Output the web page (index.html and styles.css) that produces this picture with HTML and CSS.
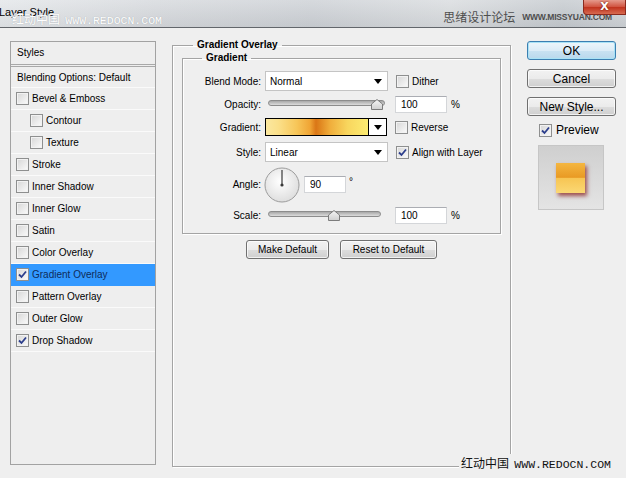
FILE: index.html
```html
<!doctype html>
<html>
<head>
<meta charset="utf-8">
<title>Layer Style</title>
<link rel="stylesheet" href="styles.css">
</head>
<body>

<div class="titlebar">
	<span class="title">Layer Style</span>
	<span class="wm-top"><span class="cjk">红动中国</span> <span class="mono">WWW.REDOCN.COM</span></span>
	<span class="wm-right"><span class="cjk">思绪设计论坛</span><small>WWW.MISSYUAN.COM</small></span>
	<span class="close">X</span>
</div>

<div class="main">
	<div class="styles-list">
		<div class="list-head">Styles</div>
		<div class="row-item plain">Blending Options: Default</div>
		<div class="row-item"><i class="cb"></i>Bevel &amp; Emboss</div>
		<div class="row-item sub"><i class="cb"></i>Contour</div>
		<div class="row-item sub"><i class="cb"></i>Texture</div>
		<div class="row-item"><i class="cb"></i>Stroke</div>
		<div class="row-item"><i class="cb"></i>Inner Shadow</div>
		<div class="row-item"><i class="cb"></i>Inner Glow</div>
		<div class="row-item"><i class="cb"></i>Satin</div>
		<div class="row-item"><i class="cb"></i>Color Overlay</div>
		<div class="row-item active"><i class="cb"><svg width="11" height="11"><path d="M2 5.5 L4.5 8 L9 2.5" fill="none" stroke="#2c3e8c" stroke-width="1.8"/></svg></i>Gradient Overlay</div>
		<div class="row-item"><i class="cb"></i>Pattern Overlay</div>
		<div class="row-item"><i class="cb"></i>Outer Glow</div>
		<div class="row-item"><i class="cb"><svg width="11" height="11"><path d="M2 5.5 L4.5 8 L9 2.5" fill="none" stroke="#2c3e8c" stroke-width="1.8"/></svg></i>Drop Shadow</div>
	</div>

	<fieldset class="group outer">
		<legend>Gradient Overlay</legend>
		<fieldset class="group inner">
			<legend>Gradient</legend>

			<div class="frow r1">
				<label>Blend Mode:</label>
				<div class="select">Normal<i class="arrow"></i></div>
				<i class="cb after"></i><span class="opt">Dither</span>
			</div>

			<div class="frow r2">
				<label>Opacity:</label>
				<div class="slider">
					<div class="track"></div>
					<svg class="thumb" style="left:106px" width="12" height="11"><defs><linearGradient id="tg" x1="0" y1="0" x2="0" y2="1"><stop offset="0" stop-color="#f6f6f6"/><stop offset="1" stop-color="#cfcfcf"/></linearGradient></defs><polygon points="0.5,5 6,0.5 11.5,5 11.5,10.5 0.5,10.5" fill="url(#tg)" stroke="#7c7c7c"/></svg>
				</div>
				<div class="num wide">100</div><span class="unit">%</span>
			</div>

			<div class="frow r3">
				<label>Gradient:</label>
				<div class="grad"><div class="grad-fill"></div><div class="grad-drop"><i class="arrow"></i></div></div>
				<i class="cb after"></i><span class="opt">Reverse</span>
			</div>

			<div class="frow r4">
				<label>Style:</label>
				<div class="select">Linear<i class="arrow"></i></div>
				<i class="cb after"><svg width="11" height="11"><path d="M2 5.5 L4.5 8 L9 2.5" fill="none" stroke="#2c3e8c" stroke-width="1.8"/></svg></i><span class="opt">Align with Layer</span>
			</div>

			<div class="frow r5">
				<label>Angle:</label>
				<svg class="dial" width="36" height="36"><defs><radialGradient id="dg" cx="0.45" cy="0.4" r="0.6"><stop offset="0" stop-color="#ffffff"/><stop offset="1" stop-color="#dedede"/></radialGradient></defs><circle cx="18" cy="18" r="17" fill="url(#dg)" stroke="#9c9c9c"/><line x1="18" y1="18" x2="18" y2="3" stroke="#3a3a3a" stroke-width="1.2"/><circle cx="18" cy="18" r="1.6" fill="#3a3a3a"/></svg>
				<div class="num angle">90</div><span class="deg">°</span>
			</div>

			<div class="frow r6">
				<label>Scale:</label>
				<div class="slider short">
					<div class="track"></div>
					<svg class="thumb" style="left:63px" width="12" height="11"><polygon points="0.5,5 6,0.5 11.5,5 11.5,10.5 0.5,10.5" fill="url(#tg)" stroke="#7c7c7c"/></svg>
				</div>
				<div class="num wide">100</div><span class="unit">%</span>
			</div>
		</fieldset>

		<div class="defaults">
			<button class="btn make">Make Default</button>
			<button class="btn reset">Reset to Default</button>
		</div>
	</fieldset>

	<div class="side">
		<button class="btn big ok">OK</button>
		<button class="btn big">Cancel</button>
		<button class="btn big">New Style...</button>
		<div class="preview-row"><i class="cb"><svg width="11" height="11"><path d="M2 5.5 L4.5 8 L9 2.5" fill="none" stroke="#2c3e8c" stroke-width="1.8"/></svg></i>Preview</div>
		<div class="preview"><div class="swatch"></div></div>
	</div>
</div>

<div class="wm-bottom"><span class="cjk">红动中国</span> <span class="mono">WWW.REDOCN.COM</span></div>

</body>
</html>
```

FILE: styles.css
```css
body{ margin:0; width:626px; height:478px; overflow:hidden; position:relative; background:#efefef; color:#000; font:10px "Liberation Sans", Arial, sans-serif; }
i{ font-style:normal; }

/* title bar */
.titlebar{ height:27px; border-bottom:1px solid #62666b; display:flex; align-items:flex-start; position:relative;
	background:linear-gradient(rgba(255,255,255,.2), rgba(0,0,0,.04)), linear-gradient(90deg, #e3e6e9 0%, #d5d8dc 25%, #ccd0d5 50%, #d8dbde 72%, #c4c9ce 90%, #ced2d6 100%); }
.title{ font-size:11px; margin:6px 0 0 -1px; }
.cjk{ font-family:"Noto Sans CJK SC", sans-serif; }
.mono{ font-family:"Liberation Mono", monospace; }
.wm-top{ position:absolute; left:12px; top:10px; color:#fff; font-size:12px; text-shadow:0 0 1px #9aa0a6; }
.wm-top .mono{ font-size:11.5px; margin-left:2px; }
.wm-right{ margin:8px 14px 0 auto; display:flex; align-items:center; color:#4e4e4e; }
.wm-right .cjk{ font-size:12px; }
.wm-right small{ font:bold 8.5px "Liberation Sans", Arial, sans-serif; margin-left:7px; letter-spacing:-0.2px; }
.close{ position:absolute; right:0; top:0; width:43px; height:15px; box-sizing:border-box; border:1px solid #8a2a1e; border-top:none; border-radius:0 0 0 4px;
	background:linear-gradient(#e59a8c, #d0523e 50%, #c0321d 51%, #d76a50); color:#fff; font:bold 11px "DejaVu Sans", sans-serif; line-height:13px; text-align:center; text-shadow:0 0 2px #5a0c00; }

.main{ display:flex; align-items:flex-start; }

/* styles list */
.styles-list{ width:146px; height:424px; box-sizing:border-box; margin:13px 0 0 10px; border:1px solid #a2a2a2; background:#eeeeee; }
.list-head{ height:22px; line-height:22px; padding-left:6px; border-bottom:3px double #a8a8a8; }
.row-item{ height:21px; border-bottom:1px solid #fafafa; display:flex; align-items:center; padding-left:5px; }
.row-item.plain{ height:20px; padding-left:6px; }
.row-item.sub{ padding-left:19px; }
.row-item .cb{ margin-right:3px; }
.row-item.active{ background:#3399ff; color:#0e2c5a; border-bottom-color:#3399ff; }

.cb{ width:13px; height:13px; box-sizing:border-box; flex:none; display:inline-flex; align-items:center; justify-content:center; border:1px solid #8e8f8f; background:linear-gradient(135deg, #d6d6d6, #fbfbfb); box-shadow:inset 0 0 0 1px #f2f2f2; }

/* group boxes */
.group{ margin:0; padding:0; min-width:0; border:1px solid #a4a4a4; box-shadow:1px 1px 0 #fff, inset 1px 1px 0 #fff; }
.group legend{ padding:0 4px; font-weight:bold; line-height:12px; }
.outer{ width:339px; height:428px; box-sizing:border-box; margin:11px 0 0 16px; }
.outer > legend{ margin-left:20px; }
.inner{ width:319px; height:182px; box-sizing:border-box; margin:1px 0 0 9px; padding-top:6px; }
.inner > legend{ margin-left:19px; }

.frow{ display:flex; align-items:center; height:22px; }
.frow label{ width:78px; text-align:right; margin-right:4px; flex:none; }
.r2, .r3{ margin-top:1px; }
.r4{ margin-top:3px; }
.r5{ height:35px; margin-top:4px; }
.r6{ margin-top:2px; }

.select{ width:123px; height:20px; box-sizing:border-box; border:1px solid #c4c4c4; background:#fff; display:flex; align-items:center; padding-left:4px; position:relative; }
.arrow{ width:0; height:0; border-left:4px solid transparent; border-right:4px solid transparent; border-top:5px solid #000; }
.select .arrow{ margin-left:auto; margin-right:5px; }
.cb.after{ margin-left:8px; flex:none; }
.opt{ margin-left:3px; }

.slider{ width:123px; height:12px; position:relative; }
.track{ height:4px; margin:2px 3px 0 3px; border:1px solid #8c8c8c; border-radius:3px; background:linear-gradient(#a8a8a8, #dcdcdc); }
.slider.short .track{ margin-right:7px; }
.thumb{ position:absolute; top:1px; }

.num{ height:17px; box-sizing:border-box; border:1px solid #d4d6d9; border-top-color:#abadb3; background:#fff; padding-left:5px; line-height:15px; }
.num.wide{ width:52px; margin-left:7px; }
.unit{ margin-left:4px; }
.dial{ flex:none; margin-left:-1px; }
.num.angle{ width:42px; margin-left:4px; }
.deg{ margin-left:3px; align-self:flex-start; margin-top:9px; }

.grad{ width:122px; height:18px; box-sizing:border-box; border:1px solid #000; display:flex; }
.grad-fill{ flex:1; background:linear-gradient(90deg, #fbe8a0 0%, #fbe08a 12%, #f7c659 30%, #f0a535 43%, #da7616 49%, #e08620 53%, #f0ae3c 63%, #f8d65e 80%, #fcec72 100%); }
.grad-drop{ width:17px; border-left:1px solid #000; background:#fff; display:flex; align-items:center; justify-content:center; }

.defaults{ display:flex; justify-content:center; gap:11px; margin-top:6px; }

/* buttons */
.btn{ height:19px; box-sizing:border-box; padding:0; border:1px solid #707070; border-radius:3px; color:#000; font:10px "Liberation Sans", Arial, sans-serif;
	background:linear-gradient(#f2f2f2 0%, #ebebeb 50%, #dddddd 51%, #cfcfcf 100%); box-shadow:inset 0 0 0 1px rgba(255,255,255,.7); }
.btn.make{ width:83px; }
.btn.reset{ width:97px; }

.side{ width:89px; margin:13px 0 0 16px; display:flex; flex-direction:column; gap:9px; }
.btn.big{ width:89px; font-size:12px; line-height:16px; }
.btn.ok{ border-color:#3c7fb1; background:linear-gradient(#eef6fb 0%, #dcecf7 50%, #c9e2f2 51%, #b9d8ec 100%); box-shadow:inset 0 0 0 1px #a9e2f6; }
.preview-row{ display:flex; align-items:center; height:16px; margin:-3px 0 0 12px; font-size:12px; }
.preview-row .cb{ margin-right:4px; }
.preview{ width:66px; height:65px; box-sizing:border-box; margin:-2px 0 0 11px; border:1px solid #c6c6c6; background:linear-gradient(#cfcfcf, #e4e4e4); padding:17px 0 0 17px; }
.swatch{ width:29px; height:30px; background:linear-gradient(#f4b640 0%, #e99a24 48%, #f7c553 50%, #fbd874 100%); box-shadow:2px 3px 4px rgba(130,20,20,.7); }

.wm-bottom{ position:absolute; left:459px; top:454px; padding:0 2px; background:#efefef; font-size:12px; color:#111; }
.wm-bottom .mono{ font-size:11.5px; margin-left:2px; }
```
